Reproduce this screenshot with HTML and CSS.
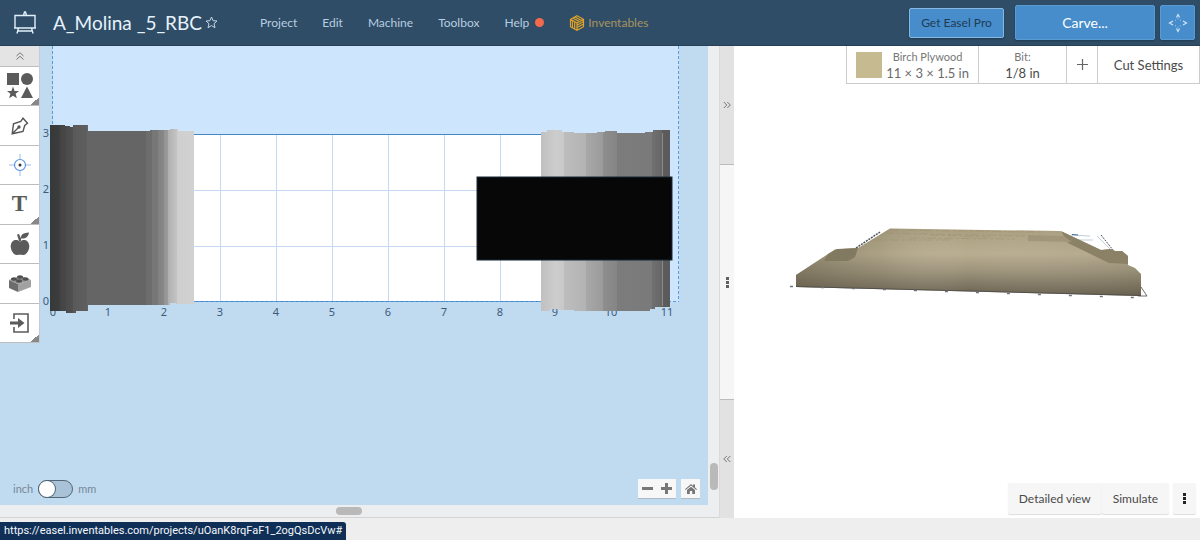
FILE: index.html
```html
<!DOCTYPE html>
<html lang="en">
<head>
<meta charset="utf-8">
<title>A_Molina _5_RBC</title>
<link rel="stylesheet" href="styles.css">
</head>
<body>
<header class="topbar">
  <a class="logo" href="#" aria-label="Home">
    <svg width="24" height="24" viewBox="0 0 24 24" fill="none" stroke="#e3f0fa" stroke-width="1.4"><path d="M2 4.500H22V17H2ZM1 17H23M10.500 4.500 11.500 1H12.500L13.500 4.500M5.500 17 4 22.500M18.500 17 20 22.500M4.500 20H19.500"/></svg>
  </a>
  <h1 class="title">A_Molina _5_RBC</h1>
  <button class="star" aria-label="Favorite">
    <svg width="13" height="13" viewBox="0 0 13 13" fill="none" stroke="#c3d6e6"><path d="M6.500 1 8.100 4.700 12 5 9 7.700 10 11.700 6.500 9.600 3 11.700 4 7.700 1 5 4.900 4.700Z"/></svg>
  </button>
  <nav class="menu">
    <a href="#">Project</a>
    <a href="#">Edit</a>
    <a href="#">Machine</a>
    <a href="#">Toolbox</a>
    <a href="#">Help<span class="dot"></span></a>
    <a class="brand" href="#"><svg width="16" height="16" viewBox="0 0 16 16" fill="none" stroke="#dfa326" stroke-width="1.200"><path d="M8 .800 14.500 4.300V11.700L8 15.200 1.500 11.700V4.300ZM8 8V15M8 8 14.500 4.300M8 8 1.500 4.300M4 3.200 10.500 6.600M6 2 12.500 5.500M3.500 6V12.500M5.700 7.200V13.500M8 10.200 14.500 6.600M8 12.600 14.500 9"/></svg>Inventables</a>
  </nav>
  <div class="actions">
    <button class="btn pro">Get Easel Pro</button>
    <button class="btn carve">Carve...</button>
    <button class="btn jog" aria-label="Jog machine">
      <svg width="20" height="20" viewBox="0 0 20 20" fill="none" stroke="#cfe5f7" stroke-width="1.200"><path d="M8.500 4.500 10 1.500 11.500 4.500M8.500 15.500 10 18.500 11.500 15.500M5 8 1.500 10 5 12M15 8 18.500 10 15 12"/><path stroke-dasharray="1 2" stroke-width=".8" d="M7 7.500 10 5.500 13 7.500M7 12.500 10 14.500 13 12.500"/></svg>
    </button>
  </div>
</header>

<main class="main">
  <section class="editor">
    <div class="workspace">
      <svg class="scene" viewBox="0 46 708 459" preserveAspectRatio="xMinYMin slice">
        <defs>
          <linearGradient id="left">
            <stop offset="0" stop-color="#373938"/><stop offset=".07" stop-color="#3c3d3d"/>
            <stop offset=".07" stop-color="#434343"/><stop offset=".11" stop-color="#484848"/>
            <stop offset=".11" stop-color="#4b4b4b"/><stop offset=".16" stop-color="#505050"/>
            <stop offset=".16" stop-color="#595959"/><stop offset=".26" stop-color="#5f5f5f"/>
            <stop offset=".26" stop-color="#656565"/><stop offset=".67" stop-color="#656565"/>
            <stop offset=".67" stop-color="#6d6d6d"/><stop offset=".71" stop-color="#6d6d6d"/>
            <stop offset=".71" stop-color="#777"/><stop offset=".75" stop-color="#777"/>
            <stop offset=".75" stop-color="#808080"/><stop offset=".79" stop-color="#888"/>
            <stop offset=".79" stop-color="#939393"/><stop offset=".82" stop-color="#9b9b9b"/>
            <stop offset=".82" stop-color="#b1b1b1"/><stop offset=".88" stop-color="#c3c3c3"/>
            <stop offset=".88" stop-color="#cfcfcf"/><stop offset="1" stop-color="#d1d1d1"/>
          </linearGradient>
          <linearGradient id="right">
            <stop offset="0" stop-color="#c0c0c0"/><stop offset=".12" stop-color="#cdcdcd"/>
            <stop offset=".18" stop-color="#c8c8c8"/><stop offset=".18" stop-color="#bdbdbd"/>
            <stop offset=".35" stop-color="#b3b3b3"/><stop offset=".35" stop-color="#a8a8a8"/>
            <stop offset=".48" stop-color="#9b9b9b"/><stop offset=".48" stop-color="#8e8e8e"/>
            <stop offset=".59" stop-color="#858585"/><stop offset=".59" stop-color="#7c7c7c"/>
            <stop offset=".86" stop-color="#7a7a7a"/><stop offset=".86" stop-color="#707070"/>
            <stop offset=".94" stop-color="#666"/><stop offset=".94" stop-color="#5c5c5c"/>
            <stop offset="1" stop-color="#5a5a5a"/>
          </linearGradient>
        </defs>
        <rect x="53" y="46" width="626" height="256" fill="#cde6fe"/>
        <rect x="53" y="134" width="616" height="168" fill="#fff"/>
        <path class="grid" d="M108.500 135V302M164.500 135V302M220.500 135V302M276.500 135V302M332.500 135V302M388.500 135V302M444.500 135V302M500.500 135V302M53 190.500H669M53 246.500H669"/>
        <path class="edge" d="M53 134.500H669M53 301.500H669"/>
        <path class="bounds" d="M52.500 46V302M678.500 46V302M53 301.500H679"/>
        <g class="ruler">
          <text x="46" y="137">3</text><text x="46" y="193">2</text><text x="46" y="249">1</text><text x="46" y="305">0</text>
          <text x="53" y="316">0</text><text x="108" y="316">1</text><text x="164" y="316">2</text><text x="220" y="316">3</text><text x="276" y="316">4</text><text x="332" y="316">5</text><text x="388" y="316">6</text><text x="444" y="316">7</text><text x="500" y="316">8</text><text x="555" y="316">9</text><text x="611" y="316">10</text><text x="667" y="316">11</text>
        </g>
        <path fill="url(#left)" d="M50 125H65V126H70V127H73V125H88V131H150V130H170V129H178V131H194V304H176V303H170V305H88V311H76V313H66V311H50Z"/>
        <path fill="url(#right)" d="M541 132H547V130H562V132H574V133H597V132H605V131H617V133H645V132H653V130H670V307H655V309H650V311H574V310H558V309H550V311H541Z"/>
        <path stroke="#8a8a8a" d="M662.500 133V306"/>
        <rect x="477" y="177" width="195" height="83" fill="#070707" stroke="#182a36"/>
      </svg>

      <div class="toolbar">
        <button class="tool collapse" aria-label="Collapse tools"><svg width="10" height="8" viewBox="0 0 10 8" fill="none" stroke="#777"><path d="M1.500 4 5 .800 8.500 4M1.500 7.500 5 4.300 8.500 7.500"/></svg></button>
        <button class="tool more" aria-label="Shapes"><svg width="26" height="26" viewBox="0 0 26 26" fill="#5b5b5b"><path d="M0 0H12V12H0Z"/><circle cx="20" cy="6" r="6"/><path d="M6 13.500 7.600 17.900 12 18 8.600 20.800 9.900 25.300 6 22.700 2.100 25.300 3.400 20.800 0 18 4.400 17.900ZM20 13.500 26 25H14Z"/></svg></button>
        <button class="tool" aria-label="Pen"><svg width="18" height="18" viewBox="0 0 18 18" fill="none" stroke="#555" stroke-width="1.400"><path d="M1.200 16.800 2.500 6.800 9.800 4.300 12 1.200 16.500 6.200 13.700 8.500 12 14.500ZM1.500 16.500 7.500 10.500"/><circle cx="8" cy="10" r="1" fill="#555"/></svg></button>
        <button class="tool" aria-label="Drill point"><svg width="22" height="22" viewBox="0 0 22 22" fill="none" stroke="#5b97e0"><circle cx="11" cy="11" r="5.500" stroke-width="1.200"/><path stroke="#9bbfec" d="M11 0V5M11 17V22M0 11H5M17 11H22"/><circle cx="11" cy="11" r="1.500" fill="#333" stroke="none"/></svg></button>
        <button class="tool more letter">T</button>
        <button class="tool" aria-label="Icon library"><svg width="20" height="24" viewBox="0 0 20 24" fill="#5b5b5b"><path d="M10 9.500C7 6.500 1 7.500 .700 14 .600 18.500 4 23.500 7 23 9 22.500 11 22.500 13 23 16 23.500 19.400 18.500 19.300 14 19 7.500 13 6.500 10 9.500ZM9.200 9.500 7 2.500 9 2 11 6.500V9.500ZM11 6.500C10.500 2.500 13.500 .700 19 .500 18.500 4.500 16 7 11 6.500Z"/></svg></button>
        <button class="tool" aria-label="Apps"><svg width="22" height="17" viewBox="0 0 22 17"><path fill="#6d6d6d" d="M0 5 9 9V17L0 13Z"/><path fill="#a1a1a1" d="M9 9 22 5V12L9 17Z"/><path fill="#929292" d="M0 5 12 1 22 5 9 9Z"/><g fill="#4f4f4f"><ellipse cx="11" cy="2" rx="3" ry="1.700"/><ellipse cx="5" cy="4" rx="3" ry="1.700"/><ellipse cx="16.500" cy="4" rx="3" ry="1.700"/><ellipse cx="10" cy="6" rx="3" ry="1.700"/></g></svg></button>
        <button class="tool more" aria-label="Import"><svg width="20" height="20" viewBox="0 0 20 20" fill="none" stroke="#5b5b5b" stroke-width="1.600"><path d="M4 6V1H18V19H4V14"/><path fill="#5b5b5b" stroke="none" d="M0 8.500H8V5L14.500 10 8 15V11.500H0Z"/></svg></button>
      </div>

      <div class="controls">
        <div class="units">
          <span>inch</span>
          <input id="units" class="switch" type="checkbox" aria-label="Use millimeters">
          <label for="units">mm</label>
        </div>
        <div class="zoom">
          <div class="zoom-pair">
            <button aria-label="Zoom out"><svg width="11" height="11" viewBox="0 0 11 11"><path fill="#777" d="M0 4H11V7H0Z"/></svg></button>
            <button aria-label="Zoom in"><svg width="11" height="11" viewBox="0 0 11 11"><path fill="#777" d="M0 4H4V0H7V4H11V7H7V11H4V7H0Z"/></svg></button>
          </div>
          <button class="home" aria-label="Zoom to fit"><svg width="12" height="10" viewBox="0 0 12 10" fill="#777"><path d="M6 0 8 1.700V.500H10V3.500L12 5.200 11.300 6 6 1.600.700 6 0 5.200ZM6 2.700 10 6V10H7.200V7H4.800V10H2V6Z"/></svg></button>
        </div>
      </div>
    </div>
    <div class="track vertical"><div class="thumb"></div></div>
    <div class="track horizontal"><div class="thumb"></div></div>
    <div class="divider">
      <button class="expand" aria-label="Expand design"><svg width="8" height="8" viewBox="0 0 8 8" fill="none" stroke="#777"><path d="M.800 1 3.800 4 .800 7M4.300 1 7.300 4 4.300 7"/></svg></button>
      <div class="grip"><svg width="3" height="11" viewBox="0 0 3 11" fill="#606060"><path d="M0 0H3V3H0ZM0 4H3V7H0ZM0 8H3V11H0Z"/></svg></div>
      <button class="expand" aria-label="Expand preview"><svg width="8" height="8" viewBox="0 0 8 8" fill="none" stroke="#777"><path d="M3.800 1 .800 4 3.800 7M7.300 1 4.300 4 7.300 7"/></svg></button>
    </div>
  </section>

  <section class="preview">
    <svg class="scene" viewBox="734 46 466 472" preserveAspectRatio="xMidYMin meet">
      <defs>
        <linearGradient id="wood" x1="0" y1="0" x2="0" y2="1"><stop offset="0" stop-color="#a89d7e"/><stop offset=".18" stop-color="#b0a687"/><stop offset=".38" stop-color="#b8ad90"/><stop offset=".65" stop-color="#9a9179"/><stop offset="1" stop-color="#675f4e"/></linearGradient>
        <linearGradient id="shade"><stop offset="0" stop-color="#5b5442" stop-opacity=".45"/><stop offset=".25" stop-color="#6b6350" stop-opacity=".15"/><stop offset=".5" stop-color="#fff" stop-opacity="0"/><stop offset="1" stop-color="#665d48" stop-opacity=".12"/></linearGradient>
      </defs>
      <path fill="none" stroke="#4d515c" stroke-width="1.500" stroke-dasharray="2 1" d="M856 248 880 232"/>
      <path fill="none" stroke="#a8b8c8" stroke-width=".7" d="M1071 235 1090 236M1078 240 1093 240M1097 236 1110 249"/>
      <path fill="none" stroke="#3d6ba0" d="M1072 234.500 1078 235"/>
      <path fill="none" stroke="#555" stroke-dasharray="2 1" d="M1101 235 1113 250"/>
      <path fill="url(#wood)" d="M796 275 835 249.500 858 248 890 228.500 1060 231 1101 250 1111 249 1115 251 1122 251 1128 256V265L1135 268 1141 274V296L796 287Z"/>
      <path fill="url(#shade)" d="M796 275 835 249.500 858 248 890 228.500 1060 231 1101 250 1111 249 1115 251 1122 251 1128 256V265L1135 268 1141 274V296L796 287Z"/>
      <path fill="#827961" d="M828 254 837 249 858 248 855 257 848 261 824 261Z"/>
      <path fill="#8b8167" d="M1061 231 1101 250 1111 249 1115 251 1122 251 1128 256V264L1109 263 1068 243Z"/>
      <path fill="#a1967a" d="M1028 235 1064 236 1072 242 1028 241Z"/>
      <path stroke="#9c8e6b" stroke-width=".5" stroke-dasharray="9 3 3 2" fill="none" d="M885 233 1025 236M910 238 1015 239M890 230 1042 232M930 235 990 237M873 240 950 240"/>
      <path stroke="#4b4a47" stroke-width=".8" fill="none" d="M796 286.500 1141 295.500M1141 287 1147 296 1138 296"/>
      <path stroke="#6e7380" stroke-width="1.500" fill="none" stroke-dasharray="3 28" d="M790 286.500 1147 298"/>
    </svg>
    <div class="setup">
      <button class="material"><span class="swatch"></span><span class="stack"><small>Birch Plywood</small><span>11 × 3 × 1.5 in</span></span></button>
      <button class="bit stack"><small>Bit:</small><span>1/8 in</span></button>
      <button class="add" aria-label="Add bit"><svg width="11" height="11" viewBox="0 0 11 11" stroke="#666" stroke-width="1.200"><path d="M5.500 0V11M0 5.500H11"/></svg></button>
      <button class="cut">Cut Settings</button>
    </div>
    <div class="view-actions">
      <div class="view-pair"><button>Detailed view</button><button>Simulate</button></div>
      <button class="kebab" aria-label="More options"><svg width="3" height="11" viewBox="0 0 3 11" fill="#222"><path d="M0 0H3V3H0ZM0 4H3V7H0ZM0 8H3V11H0Z"/></svg></button>
    </div>
  </section>
</main>

<footer class="footer"><span class="url">https://easel.inventables.com/projects/uOanK8rqFaF1_2ogQsDcVw#</span></footer>
</body>
</html>
```

FILE: styles.css
```css
* { box-sizing: border-box; }

body {
  margin: 0;
  height: 100vh;
  display: flex;
  flex-direction: column;
  overflow: hidden;
  font: 12px/16px Lato, sans-serif;
  color: #4a4a4a;
}

button {
  margin: 0;
  padding: 0;
  border: 0;
  background: none;
  font: inherit;
  color: inherit;
  cursor: pointer;
}

svg { display: block; }

/* Header */
.topbar {
  display: flex;
  align-items: center;
  padding: 0 5px 0 13px;
  height: 46px;
  flex: none;
  background: #2f4d67;
  border-bottom: 1px solid #263f55;
}
.title {
  margin: 0 0 0 16px;
  font-size: 19px;
  line-height: 24px;
  font-weight: 400;
  color: #e6f2fb;
  white-space: nowrap;
}
.star { margin-left: 3px; }
.menu { display: flex; gap: 25px; margin-left: 42px; }
.menu a {
  display: flex;
  align-items: center;
  color: #b7cee0;
  text-decoration: none;
}
.dot {
  width: 9px;
  height: 9px;
  margin-left: 6px;
  border-radius: 50%;
  background: #f16a4b;
}
.menu .brand { gap: 3px; color: #a8935f; }
.actions { display: flex; align-items: center; margin-left: auto; }
.btn {
  display: flex;
  align-items: center;
  justify-content: center;
  height: 35px;
  border: 1px solid #5b9bd3;
  border-radius: 2px;
  background: #478dcb;
  box-shadow: 0 1px 2px #203b53;
}
.pro { width: 95px; height: 30px; margin-right: 11px; border-color: #86b8e2; color: #203c55; }
.carve { width: 140px; margin-right: 5px; font-size: 14px; color: #fff; }
.jog { width: 35px; }

/* Panes */
.main {
  flex: 1;
  min-height: 0;
  display: grid;
  grid-template-columns: 734fr 466fr;
}
.editor {
  min-width: 0;
  min-height: 0;
  display: grid;
  grid-template: minmax(0, 1fr) 13px / minmax(0, 1fr) 11px 15px;
  background: #eceef0;
}
.workspace, .preview {
  min-width: 0;
  min-height: 0;
  display: grid;
  grid-template: minmax(0, 1fr) auto / minmax(0, 1fr);
}
.workspace { background: #c0daf0; }
.preview { background: #fff; grid-template-rows: auto minmax(0, 1fr) auto; }
.scene { grid-area: 1 / 1 / -1 / -1; width: 100%; height: 100%; min-height: 0; }
.grid { stroke: #c5daf2; }
.edge { stroke: #4388c5; }
.bounds { stroke: #569bdd; stroke-dasharray: 3 2; fill: none; }
.ruler { font: 11px "Noto Sans", sans-serif; fill: #3c5c7b; text-anchor: middle; }

/* Tools */
.toolbar {
  grid-area: 1 / 1;
  align-self: start;
  justify-self: start;
  display: grid;
  grid-template-rows: 21px repeat(7, 1fr);
  width: 40px;
  height: 297px;
  background: #fff;
  border-right: 1px solid #c3ccd5;
  z-index: 1;
}
.tool {
  display: grid;
  place-items: center;
  border-bottom: 1px solid #bdbdbd;
}
.collapse { background: #e4e4e4; }
.more { background: linear-gradient(135deg, transparent 50%, #888 50%) right bottom / 8px 8px no-repeat; }
.letter { font: bold 23px "Liberation Serif", serif; color: #5b5b5b; }

.controls {
  grid-area: 2 / 1;
  display: flex;
  align-items: center;
  justify-content: space-between;
  padding: 0 8px 7px 13px;
  z-index: 1;
}
.units { display: flex; align-items: center; gap: 5px; font-size: 11px; color: #778997; }
.switch {
  appearance: none;
  display: flex;
  width: 35px;
  height: 18px;
  margin: 0;
  border: 1px solid #536776;
  border-radius: 9px;
  background: #a9c2d8;
}
.switch::before {
  content: "";
  width: 16px;
  border-radius: 50%;
  background: #fff;
  box-shadow: 0 0 0 1px #536776;
}
.switch:checked { justify-content: flex-end; }
.zoom, .zoom-pair { display: flex; }
.zoom { gap: 5px; }
.zoom button {
  display: grid;
  place-items: center;
  width: 19px;
  height: 19px;
  background: #f7f7f7;
  box-shadow: 0 1px 0 #b0bbc5;
}

/* Scrollbars and pane divider */
.track { display: flex; padding: 2px; }
.vertical { flex-direction: column; justify-content: flex-end; padding-bottom: 15px; }
.vertical .thumb { height: 27px; width: 8px; }
.horizontal { grid-area: 2 / 1 / 3 / 3; border-bottom: 1px solid #d4d4d4; padding: 2px 0; justify-content: center; }
.horizontal .thumb { width: 26px; height: 8px; margin-right: 3%; }
.thumb { border-radius: 4px; background: #b9b9b9; }
.divider {
  grid-area: 1 / 3 / 3 / 4;
  display: grid;
  grid-template-rows: 1fr 2fr 1fr;
  border-left: 1px solid #dadada;
}
.divider > * { display: grid; place-items: center; }
.expand { background: #e2e2e2; }
.grip { background: #f6f6f6; border: solid #bbb; border-width: 1px 0; }

/* Preview */
.setup {
  grid-area: 1 / 1;
  justify-self: end;
  display: flex;
  height: 38px;
  background: #fff;
  border: 1px solid #ccc;
  border-top: 0;
  z-index: 1;
}
.setup button + button { border-left: 1px solid #ccc; }
.stack { display: flex; flex-direction: column; align-items: center; justify-content: center; }
.setup small { font-size: 11px; line-height: 16px; color: #777; }
.material { display: flex; align-items: center; gap: 4px; padding: 0 9px; color: #6b6b6b; }
.material, .bit { font-size: 13px; }
.swatch { width: 26px; height: 26px; background: #c5ba90; }
.bit { width: 88px; }
.add { display: grid; place-items: center; width: 31px; }
.cut { width: 102px; font-size: 13px; }
.view-actions {
  grid-area: 3 / 1;
  justify-self: end;
  display: flex;
  gap: 4px;
  padding: 0 4px 4px;
  z-index: 1;
}
.view-actions button {
  height: 31px;
  background: #f6f6f6;
  border-radius: 2px;
  box-shadow: 0 1px 1px #ddd;
  padding: 0 11px;
}
.view-pair { display: flex; }
.view-actions .kebab { padding: 0 10px; }

/* Footer */
.footer { display: flex; align-items: flex-end; height: 22px; flex: none; background: #eee; }
.url {
  padding: 1px 4px;
  border-radius: 0 3px 0 0;
  background: #102f57;
  color: #f5f8fb;
  font: 11px/16px Roboto, sans-serif;
}
```
